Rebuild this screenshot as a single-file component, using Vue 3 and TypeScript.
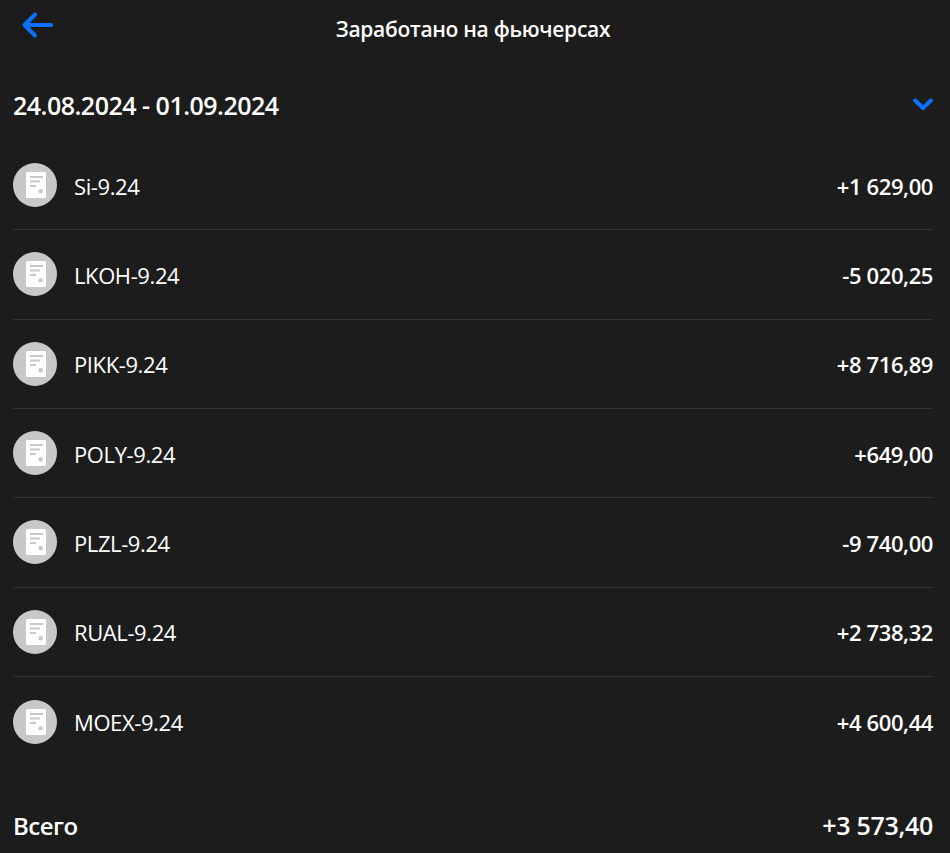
<script setup lang="ts">
interface Row {
  ticker: string;
  amount: string;
}

const rows: Row[] = [
  { ticker: "Si-9.24", amount: "+1 629,00" },
  { ticker: "LKOH-9.24", amount: "-5 020,25" },
  { ticker: "PIKK-9.24", amount: "+8 716,89" },
  { ticker: "POLY-9.24", amount: "+649,00" },
  { ticker: "PLZL-9.24", amount: "-9 740,00" },
  { ticker: "RUAL-9.24", amount: "+2 738,32" },
  { ticker: "MOEX-9.24", amount: "+4 600,44" },
];
</script>

<template>
  <div class="page">
    <header class="top">
      <svg class="back" width="34" height="30" viewBox="0 0 34 30" fill="none">
        <path d="M30 14H5M14 3.5 3.5 14 14 24.5" stroke="#0a72ff" stroke-width="4" stroke-linecap="round" stroke-linejoin="round" />
      </svg>
      <h1 class="title">Заработано на фьючерсах</h1>
    </header>

    <div class="period">
      <span class="dates">24.08.2024 - 01.09.2024</span>
      <svg class="chevron" width="20" height="13" viewBox="0 0 20 13" fill="none">
        <path d="M2.2 2.5 10 10l7.8-7.5" stroke="#0a72ff" stroke-width="4" stroke-linecap="round" stroke-linejoin="round" />
      </svg>
    </div>

    <ul class="list">
      <li v-for="row in rows" :key="row.ticker" class="row">
        <svg class="avatar" width="44" height="44" viewBox="0 0 44 44">
          <circle cx="22" cy="22" r="22" fill="#c8c8c8" />
          <rect x="13" y="9" width="20" height="26" rx="1.5" fill="#fff" />
          <rect x="17" y="13" width="13" height="2" fill="#c8c8c8" />
          <rect x="17" y="17.5" width="10" height="2" fill="#c8c8c8" />
          <rect x="17" y="22" width="6" height="2" fill="#c8c8c8" />
          <circle cx="27.7" cy="28.3" r="2.3" fill="#c8c8c8" />
        </svg>
        <span class="ticker">{{ row.ticker }}</span>
        <span class="amount">{{ row.amount }}</span>
      </li>
    </ul>

    <footer class="total">
      <span class="total-label">Всего</span>
      <span class="total-value">+3 573,40</span>
    </footer>
  </div>
</template>

<style>
html,
body {
  background: #1c1c1c;
}
</style>

<style scoped>
.page {
  height: 853px;
  box-sizing: border-box;
  padding: 0 17px 0 13px;
  overflow: hidden;
  background: #1c1c1c;
  color: #fff;
  font-family: "Open Sans", "Noto Sans", sans-serif;
}
.top {
  display: flex;
  justify-content: center;
  height: 58px;
  padding-top: 12px;
  box-sizing: border-box;
  position: relative;
}
.back {
  position: absolute;
  left: 8px;
  top: 11px;
}
.title {
  margin: 0;
  font-size: 21px;
  font-weight: 600;
  line-height: 34px;
  letter-spacing: -0.3px;
}
.period {
  display: flex;
  align-items: center;
  justify-content: space-between;
  height: 46px;
  margin-top: 24px;
}
.dates {
  font-size: 25px;
  font-weight: 600;
  letter-spacing: -0.5px;
}
.chevron {
  margin-top: -2px;
}
.list {
  list-style: none;
  margin: 13px 0 0;
  padding: 0;
}
.row {
  display: flex;
  align-items: center;
  height: 89.33px;
  box-sizing: border-box;
  border-bottom: 1px solid #333;
}
.row:last-child {
  border-bottom: 0;
}
.avatar {
  flex: none;
}
.ticker {
  margin-left: 17px;
  padding-top: 1px;
  font-size: 22px;
  letter-spacing: -0.4px;
}
.amount {
  margin-left: auto;
  padding-top: 1px;
  font-size: 22px;
  font-weight: 600;
  letter-spacing: -0.4px;
}
.total {
  display: flex;
  align-items: center;
  justify-content: space-between;
  margin-top: 42px;
  font-size: 24px;
  font-weight: 600;
  letter-spacing: -0.5px;
}
.total-value {
  font-size: 25px;
  letter-spacing: -0.3px;
}
</style>
